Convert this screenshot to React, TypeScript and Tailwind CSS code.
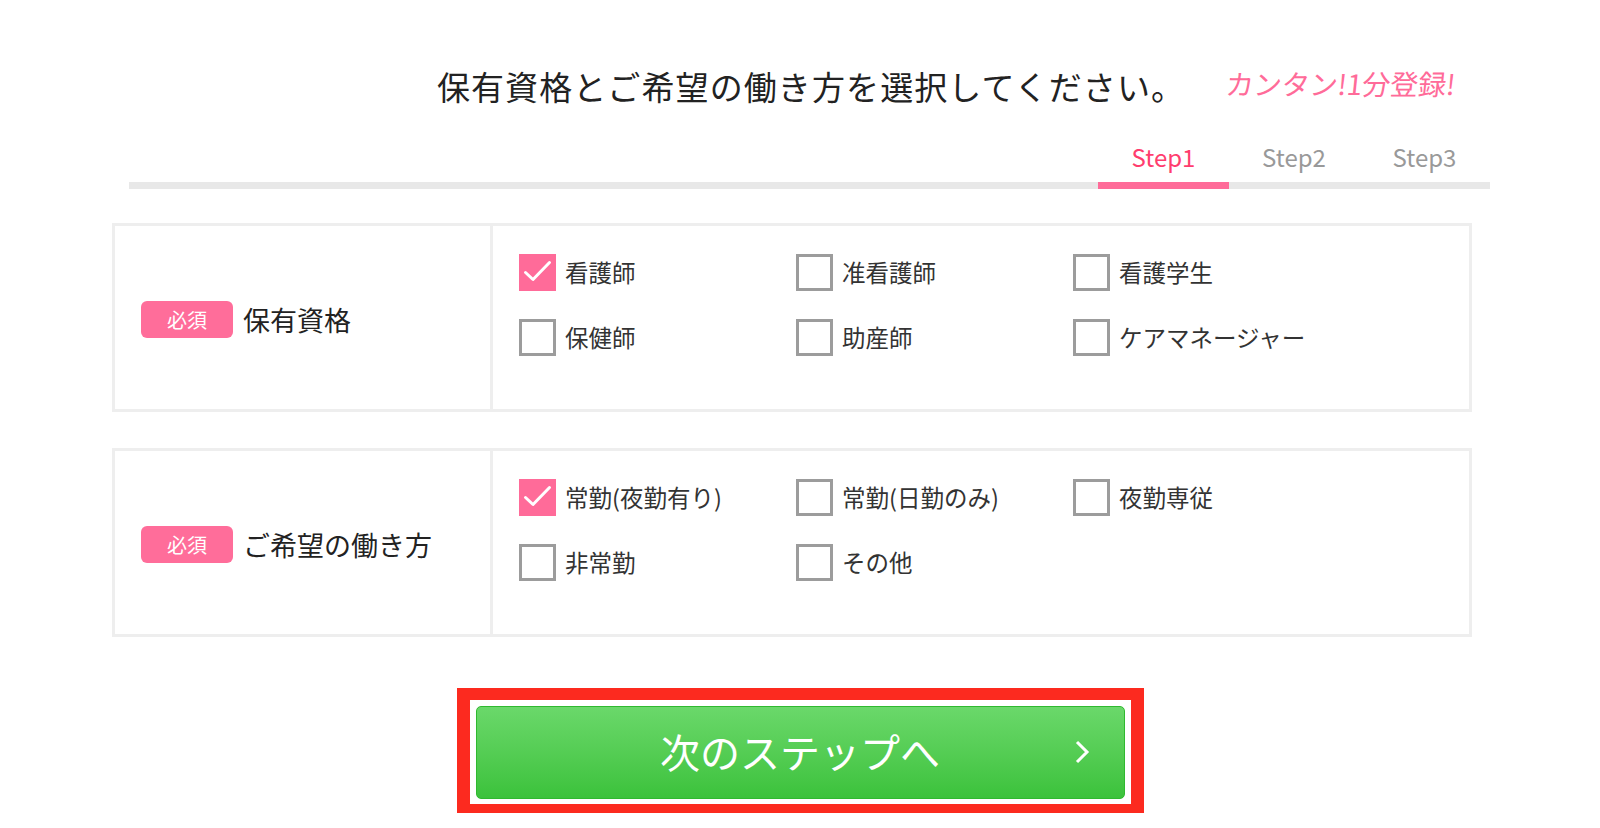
import React from "react";

const FONT = "font-['Noto_Sans_CJK_JP','Noto_Sans',sans-serif]";

type Item = { label: string; checked?: boolean };

function Checkbox({ checked }: { checked?: boolean }) {
  if (checked) {
    return (
      <span className="flex h-[37px] w-[37px] shrink-0 items-center justify-center bg-[#ff6b99]">
        <svg width="37" height="37" viewBox="0 0 37 37" fill="none">
          <path d="M6.5 18.5 L14 25.5 L30.5 8.5" stroke="#ffffff" strokeWidth="3" strokeLinecap="round" strokeLinejoin="round" />
        </svg>
      </span>
    );
  }
  return <span className="h-[37px] w-[37px] shrink-0 border-[3px] border-[#9c9c9c] bg-white" />;
}

function Option({ item }: { item: Item }) {
  return (
    <div className="flex h-[37px] items-center gap-[9px]">
      <Checkbox checked={item.checked} />
      <span className="whitespace-nowrap text-[23.5px] leading-none text-[#333333]">{item.label}</span>
    </div>
  );
}

function Section({ title, items }: { title: string; items: Item[] }) {
  return (
    <div className="flex h-[189px] w-[1360px] border-[3px] border-[#eeeeee]">
      <div className="flex w-[378px] shrink-0 items-center gap-[10px] border-r-[3px] border-[#eeeeee] pl-[26px] pt-[4px]">
        <span className="flex h-[37px] w-[92px] items-center justify-center rounded-[6px] bg-[#ff6d9a] text-[20px] leading-none text-white">
          必須
        </span>
        <span className="text-[27px] leading-none text-[#222222]">{title}</span>
      </div>
      <div className="grid grid-cols-[277px_277px_auto] content-start gap-y-[28px] pl-[26px] pt-[28px]">
        {items.map((it) => (
          <Option key={it.label} item={it} />
        ))}
      </div>
    </div>
  );
}

export default function App() {
  return (
    <div className={`${FONT} relative h-[828px] w-[1600px] overflow-hidden bg-white`}>
      {/* Header */}
      <div className="grid grid-cols-[1fr_auto_1fr] items-center pt-[62px]">
        <div />
        <h1 className="pl-[22px] text-[33px] font-normal leading-[48px] tracking-[1.1px] text-[#222222]">
          保有資格とご希望の働き方を選択してください。
        </h1>
        <div className="pl-[41px] pb-[4px]">
          <span className="inline-block -skew-x-6 whitespace-nowrap text-[28px] leading-none text-[#ff6b99]">
            カンタン!1分登録!
          </span>
        </div>
      </div>

      {/* Steps */}
      <div className="ml-[129px] mt-[30px] flex w-[1361px] justify-end border-b-[7px] border-[#e8e8e8]">
        <div className="-mb-[7px] w-[131px] border-b-[7px] border-[#ff6b99] pb-[8px] text-center text-[24px] leading-[34px] text-[#ff3d6e]">
          Step1
        </div>
        <div className="-mb-[7px] w-[130px] border-b-[7px] border-transparent pb-[8px] text-center text-[24px] leading-[34px] text-[#999999]">
          Step2
        </div>
        <div className="-mb-[7px] w-[131px] border-b-[7px] border-transparent pb-[8px] text-center text-[24px] leading-[34px] text-[#999999]">
          Step3
        </div>
      </div>

      {/* Sections */}
      <div className="ml-[112px] mt-[34px] flex flex-col gap-[36px]">
        <Section
          title="保有資格"
          items={[
            { label: "看護師", checked: true },
            { label: "准看護師" },
            { label: "看護学生" },
            { label: "保健師" },
            { label: "助産師" },
            { label: "ケアマネージャー" },
          ]}
        />
        <Section
          title="ご希望の働き方"
          items={[
            { label: "常勤(夜勤有り)", checked: true },
            { label: "常勤(日勤のみ)" },
            { label: "夜勤専従" },
            { label: "非常勤" },
            { label: "その他" },
          ]}
        />
      </div>

      {/* Button */}
      <div className="mt-[51px] flex justify-center">
        <div className="border-x-[13px] border-b-[9px] border-t-[12px] border-[#fc2a1f] bg-white px-[6px] pb-[5px] pt-[6px]">
          <button className="relative flex h-[93px] w-[649px] items-center justify-center rounded-[5px] border border-[#2fb92f] bg-gradient-to-b from-[#6ad86a] to-[#3bc23b] pb-[4px] text-[40px] leading-none text-white">
            次のステップへ
            <svg className="absolute right-[34px] top-[33px]" width="16" height="24" viewBox="0 0 16 24" fill="none">
              <path d="M3 2 L13 12 L3 22" stroke="#ffffff" strokeWidth="3" strokeLinecap="butt" strokeLinejoin="miter" />
            </svg>
          </button>
        </div>
      </div>
    </div>
  );
}
